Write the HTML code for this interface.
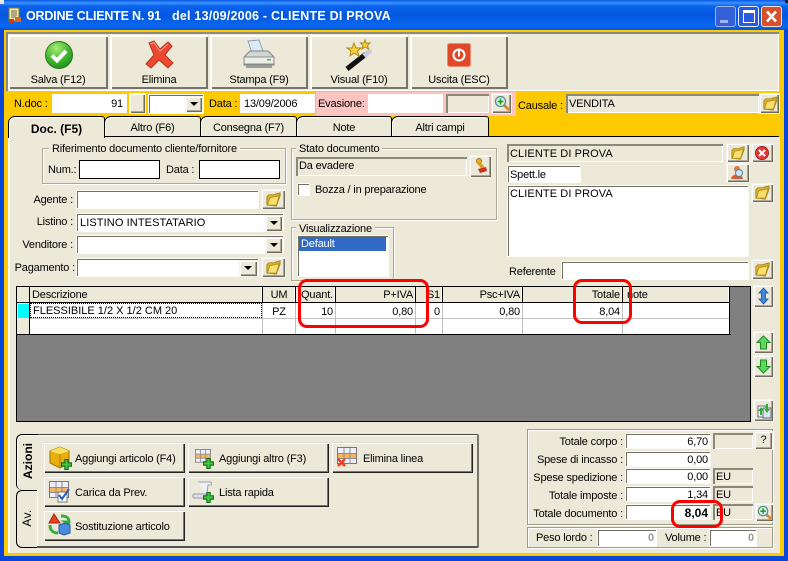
<!DOCTYPE html>
<html><head><meta charset="utf-8"><style>
html,body{margin:0;padding:0;background:#0a3cc8}
#w{position:relative;width:788px;height:561px;overflow:hidden;background:#0a46d8;font:11px/16px "Liberation Sans",sans-serif;letter-spacing:-.18px;color:#000}
#w div{position:absolute;box-sizing:border-box;white-space:nowrap}
#w svg{position:absolute;overflow:visible}
.f{background:#fff;box-shadow:inset 2px 2px 0 #716f64,inset -2px -2px 0 #fff;outline:1px solid #fdfdf8;outline-offset:-1px;padding:2px 4px;border-top:0}
.g{background:#ece9d8;box-shadow:inset 2px 2px 0 #8a8878,inset -1px -1px 0 #fff;padding:2px 3px}
.b{background:#ece9d8;box-shadow:inset 1px 1px 0 #fff,inset -1px -1px 0 #6e6c60,inset -2px -2px 0 #aca899,0 0 0 1px #f4f2e8}
.t{background:#ece9d8;box-shadow:inset 2px 2px 0 #fff,inset -2px -2px 0 #77756a;text-align:center}
.k{background:#ece9d8;box-shadow:inset 1px 1px 0 #fff,inset -1px -1px 0 #222,inset -2px -2px 0 #777;border-top:1px solid #ddd}
.gr{border:1px solid #aca899;box-shadow:inset 1px 1px 0 #fff,1px 1px 0 #fff;background:#ece9d8}
.lg{background:#ece9d8;padding:0 3px;line-height:16px}
.tab{background:#ece9d8;border:1px solid #000;border-bottom:0;border-top-left-radius:7px;border-top-right-radius:3px;text-align:center;padding-top:3px;box-shadow:inset 1px 1px 0 #fff}
.l{text-align:right}
.c{background:#000;width:1px}
.h{background:#000;height:1px}
.hd{background:#ece9d8;top:287px;height:15px;line-height:17px;padding:0 2px;box-shadow:inset -1px 0 0 #fff}
.r{text-align:right}
.red{border:3px solid #f00;border-radius:9px}
</style></head><body><div id="w">
<svg width="0" height="0" style="position:absolute"><defs>
<symbol id="fo" viewBox="0 0 16 16"><path d="M1 5 L1 14 L11 15 L15 4 L15 1 L11 2 L9 3 L3 3Z" fill="#e2b428" stroke="#a58414" stroke-width="1"/><path d="M4 6 L14 4 L11 14 L1.5 14Z" fill="#f8e070" stroke="#b4921e"/></symbol>
<symbol id="zm" viewBox="0 0 16 16"><path d="M9 9 L15 15" stroke="#e8872a" stroke-width="3"/><circle cx="6.5" cy="6.5" r="5" fill="#dff2f2" stroke="#5c8a8a" stroke-width="1.3"/><path d="M6.5 3.5v6M3.5 6.5h6" stroke="#10a010" stroke-width="1.6"/></symbol>
<symbol id="ar" viewBox="0 0 9 5"><path d="M0 0h8l-4 4z" fill="#000"/></symbol>
<symbol id="pl" viewBox="0 0 10 10"><path d="M3.5 .5h3v3h3v3h-3v3h-3v-3h-3v-3h3z" fill="#43c543" stroke="#146e14"/></symbol>
<symbol id="tb" viewBox="0 0 20 20"><rect x=".5" y=".5" width="19" height="16" fill="#eef" stroke="#777"/><rect x="1" y="7" width="18" height="5" fill="#f8b65a"/><path d="M7 1v16M13 1v16M1 6.500h18M1 11.500h18" stroke="#8d8d8d"/></symbol>
</defs></svg>

<!-- title bar -->
<div style="left:0;top:0;width:788px;height:30px;border-radius:7px 7px 0 0;background:linear-gradient(#0a58e4 0,#3a93ff 3px,#0a62ea 6px,#0458e0 16px,#0a68f0 26px,#0654dc 30px)"></div>
<div style="left:0;top:0;width:4px;height:4px;background:#e8e8e8"></div>
<div style="right:0;top:0;width:3px;height:3px;background:#222"></div>
<svg style="left:8px;top:8px" width="16" height="16"><rect x="1" y="0" width="10" height="13" fill="#f5e7a5" stroke="#8a7a30"/><path d="M3 3h6M3 5h6M3 7h6M3 9h5" stroke="#666"/><rect x="7" y="9" width="6" height="5" fill="#d86820"/><rect x="1" y="11" width="5" height="4" fill="#d03818"/></svg>
<div style="left:26px;top:9px;color:#fff;font:bold 12.5px/15px 'Liberation Sans',sans-serif;letter-spacing:-.2px">ORDINE CLIENTE N. 91</div>
<div style="left:172px;top:9px;color:#fff;font:bold 12.5px/15px 'Liberation Sans',sans-serif;letter-spacing:.22px">del 13/09/2006 - CLIENTE DI PROVA</div>
<div style="left:715px;top:6px;width:21px;height:21px;border:1px solid #9db4f0;border-radius:3px;background:#3560d8"><div style="left:4px;top:13px;width:8px;height:3px;background:#9fb4f0"></div></div>
<div style="left:738px;top:6px;width:21px;height:21px;border:1px solid #e8eefc;border-radius:3px;background:#2a5ae0"><div style="left:4px;top:3px;width:12px;height:13px;border:1px solid #fff;border-top-width:3px"></div></div>
<div style="left:761px;top:6px;width:21px;height:21px;border:1px solid #f2e4dc;border-radius:3px;background:#d8502a"><svg width="19" height="19"><path d="M5 4.500 L14 14.500 M14 4.500 L5 14.500" stroke="#fff" stroke-width="2.600"/></svg></div>

<!-- yellow frame -->
<div style="left:4px;top:30px;width:780px;height:526px;background:#fdca00"></div>

<!-- toolbar -->
<div style="left:6px;top:32px;width:773px;height:59px;background:#ece9d8;box-shadow:inset 2px 2px 0 #8c8a7c,inset -1px -1px 0 #fff"></div>
<div class="t" style="left:8px;top:35px;width:100px;height:54px;padding-top:37px">Salva (F12)</div>
<div class="t" style="left:110px;top:35px;width:98px;height:54px;padding-top:37px">Elimina</div>
<div class="t" style="left:210px;top:35px;width:98px;height:54px;padding-top:37px">Stampa (F9)</div>
<div class="t" style="left:310px;top:35px;width:98px;height:54px;padding-top:37px">Visual (F10)</div>
<div class="t" style="left:410px;top:35px;width:98px;height:54px;padding-top:37px">Uscita (ESC)</div>
<svg style="left:45px;top:41px" width="28" height="28"><defs><radialGradient id="gg" cx=".4" cy=".25" r=".8"><stop offset="0" stop-color="#a8ec78"/><stop offset=".6" stop-color="#3eb52a"/><stop offset="1" stop-color="#1f8a1c"/></radialGradient></defs><circle cx="14" cy="14" r="13.500" fill="url(#gg)" stroke="#2b7a22"/><path d="M7 14.500 L12 19.500 L21 10" fill="none" stroke="#fff" stroke-width="4"/></svg>
<svg style="left:145px;top:41px" width="29" height="28"><path d="M4 2 L9 0 L15 8 L23 1 L27 5 L20 14 L28 22 L23 27 L14 19 L6 27 L1 23 L9 14Z" fill="#ec4a30" stroke="#b63020"/><path d="M5 3 L9 1.500 L15 10 L23 3" fill="none" stroke="#f8a090"/></svg>
<svg style="left:243px;top:40px" width="32" height="30"><path d="M5 1 L16 0 L20 11 L9 13Z" fill="#dceaf8" stroke="#8aa0b8"/><path d="M1 17 L7 11 L25 11 L31 17 L31 25 L1 25Z" fill="#d4d6d4" stroke="#808480"/><path d="M1 17 L31 17 L31 24 L1 24Z" fill="#eceeec" stroke="#8a8e8a"/><path d="M3 25h26v3H3z" fill="#9a9e9a"/><rect x="24" y="19" width="4" height="1.500" fill="#50b850"/></svg>
<svg style="left:345px;top:40px" width="30" height="30"><path d="M2 29 L21 14" stroke="#111" stroke-width="5"/><path d="M19 16 L26 10" stroke="#ccd" stroke-width="5"/><path d="M9 3 L11 8 L16 8 L12.500 11 L14 16 L9 13 L5 16 L6 11 L2 8 L7 8Z" fill="#f6d040" stroke="#b08a10"/><path d="M20 0 L21 3 L25 3 L22.500 5.500 L23.500 9 L20 7 L17 9 L18 5.500 L15.500 3 L19 3Z" fill="#f6d040" stroke="#b08a10"/></svg>
<svg style="left:447px;top:43px" width="24" height="24"><rect x=".5" y=".5" width="23" height="23" rx="2" fill="#e0482a" stroke="#f08a70"/><circle cx="12" cy="12" r="5.500" fill="none" stroke="#fff" stroke-width="2"/><path d="M12 7.500v6" stroke="#fff" stroke-width="2"/></svg>

<!-- doc row -->
<div style="left:316px;top:92px;width:200px;height:24px;background:#fcc4c0"></div>
<div style="left:14px;top:96px">N.doc :</div>
<div class="f r" style="left:52px;top:94px;width:75px;height:19px;box-shadow:inset 1px 1px 0 #aaa">91</div>
<div class="b" style="left:130px;top:94px;width:15px;height:19px"></div>
<div class="f" style="left:148px;top:94px;width:56px;height:20px"></div>
<div class="b" style="left:186px;top:97px;width:16px;height:15px"><svg style="left:4px;top:5px" width="9" height="5"><use href="#ar"/></svg></div>
<div style="left:209px;top:96px">Data :</div>
<div class="f" style="left:240px;top:94px;width:75px;height:19px;box-shadow:inset 1px 1px 0 #aaa">13/09/2006</div>
<div style="left:318px;top:96px">Evasione:</div>
<div class="f" style="left:368px;top:94px;width:75px;height:19px;box-shadow:inset 1px 1px 0 #aaa"></div>
<div class="g" style="left:446px;top:94px;width:43px;height:19px"></div>
<div class="b" style="left:492px;top:94px;width:19px;height:19px"><svg style="left:2px;top:1px" width="16" height="16"><use href="#zm"/></svg></div>
<div style="left:518px;top:98px">Causale :</div>
<div class="g" style="left:566px;top:94px;width:193px;height:19px;padding-top:2px">VENDITA</div>
<div class="b" style="left:760px;top:94px;width:19px;height:19px"><svg style="left:3px;top:2px" width="15" height="15"><use href="#fo"/></svg></div>

<!-- main panel -->
<div style="left:8px;top:136px;width:772px;height:417px;background:#ece9d8;border-top:1px solid #000;border-left:2px solid #fff;border-right:2px solid #ece9d8"></div>
<div class="tab" style="left:104px;top:116px;width:97px;height:20px">Altro (F6)</div>
<div class="tab" style="left:200px;top:116px;width:97px;height:20px">Consegna (F7)</div>
<div class="tab" style="left:296px;top:116px;width:96px;height:20px">Note</div>
<div class="tab" style="left:391px;top:116px;width:98px;height:20px">Altri campi</div>
<div class="tab" style="left:8px;top:116px;width:97px;height:22px;font-weight:bold;font-size:12px;letter-spacing:0;padding-top:4px;border-bottom:0">Doc. (F5)</div>

<!-- riferimento group -->
<div class="gr" style="left:42px;top:148px;width:244px;height:36px"></div>
<div class="lg" style="left:49px;top:141px">Riferimento documento cliente/fornitore</div>
<div style="left:48px;top:162px">Num.:</div>
<div style="left:79px;top:160px;width:81px;height:19px;background:#fff;border:1px solid #000"></div>
<div style="left:166px;top:162px">Data :</div>
<div style="left:199px;top:160px;width:81px;height:19px;background:#fff;border:1px solid #000"></div>

<div class="l" style="left:10px;top:192px;width:63px">Agente :</div>
<div class="f" style="left:76px;top:190px;width:183px;height:19px"></div>
<div class="b" style="left:262px;top:190px;width:23px;height:19px"><svg style="left:4px;top:2px" width="15" height="15"><use href="#fo"/></svg></div>
<div class="l" style="left:10px;top:214px;width:63px">Listino :</div>
<div class="f" style="left:76px;top:213px;width:208px;height:19px;padding-top:2px;letter-spacing:.1px">LISTINO INTESTATARIO</div>
<div class="b" style="left:266px;top:216px;width:16px;height:15px"><svg style="left:4px;top:5px" width="9" height="5"><use href="#ar"/></svg></div>
<div class="l" style="left:10px;top:237px;width:63px">Venditore :</div>
<div class="f" style="left:76px;top:235px;width:208px;height:19px"></div>
<div class="b" style="left:266px;top:238px;width:16px;height:15px"><svg style="left:4px;top:5px" width="9" height="5"><use href="#ar"/></svg></div>
<div class="l" style="left:10px;top:260px;width:65px">Pagamento :</div>
<div class="f" style="left:76px;top:258px;width:183px;height:19px"></div>
<div class="b" style="left:240px;top:261px;width:17px;height:15px"><svg style="left:4px;top:5px" width="9" height="5"><use href="#ar"/></svg></div>
<div class="b" style="left:262px;top:258px;width:23px;height:19px"><svg style="left:4px;top:2px" width="15" height="15"><use href="#fo"/></svg></div>

<!-- stato -->
<div class="gr" style="left:291px;top:148px;width:206px;height:72px"></div>
<div class="lg" style="left:296px;top:141px">Stato documento</div>
<div class="g" style="left:296px;top:157px;width:171px;height:19px;padding-top:1px">Da evadere</div>
<div class="b" style="left:470px;top:156px;width:21px;height:21px"><svg style="left:4px;top:2px" width="14" height="17"><circle cx="5" cy="3" r="2.500" fill="#e8b020" stroke="#a87810"/><path d="M5 5 L9 10" stroke="#d8a018" stroke-width="3.500"/><path d="M4 11 L12 9 L13 13 L6 15Z" fill="#c83020"/></svg></div>
<div class="f" style="left:297px;top:183px;width:13px;height:13px"></div>
<div style="left:315px;top:182px">Bozza / in preparazione</div>

<div class="gr" style="left:291px;top:227px;width:103px;height:54px"></div>
<div class="lg" style="left:296px;top:221px">Visualizzazione</div>
<div class="f" style="left:297px;top:235px;width:92px;height:42px"></div>
<div style="left:299px;top:237px;width:87px;height:14px;background:#316ac5;color:#fff;padding-left:2px;line-height:15px">Default</div>

<!-- client -->
<div class="g" style="left:507px;top:144px;width:216px;height:18px;padding-top:2px;letter-spacing:.1px">CLIENTE DI PROVA</div>
<div class="b" style="left:727px;top:144px;width:22px;height:18px"><svg style="left:4px;top:2px" width="14" height="14"><use href="#fo"/></svg></div>
<div class="b" style="left:752px;top:144px;width:21px;height:18px"><svg style="left:3px;top:2px" width="14" height="14"><circle cx="7" cy="7" r="6.500" fill="#e83838" stroke="#a02020"/><path d="M4 4l6 6M10 4l-6 6" stroke="#fff" stroke-width="2"/></svg></div>
<div class="f" style="left:507px;top:165px;width:74px;height:18px;padding-left:3px">Spett.le</div>
<div class="b" style="left:727px;top:164px;width:22px;height:18px"><svg style="left:3px;top:1px" width="16" height="15"><path d="M1 14 C2 8 12 8 13 14Z" fill="#d85a30"/><circle cx="7" cy="4" r="3" fill="#e07a40"/><circle cx="9" cy="8" r="3.500" fill="#cfe6f2" stroke="#5a8090"/></svg></div>
<div class="f" style="left:507px;top:185px;width:242px;height:72px;padding:1px 3px;letter-spacing:.1px">CLIENTE DI PROVA</div>
<div class="b" style="left:752px;top:184px;width:21px;height:18px"><svg style="left:3px;top:1px" width="15" height="15"><use href="#fo"/></svg></div>
<div style="left:509px;top:264px">Referente</div>
<div class="f" style="left:561px;top:261px;width:188px;height:19px"></div>
<div class="b" style="left:752px;top:260px;width:21px;height:19px"><svg style="left:3px;top:2px" width="15" height="15"><use href="#fo"/></svg></div>

<!-- grid -->
<div style="left:16px;top:286px;width:735px;height:136px;background:#808080;border:1px solid #000"></div>
<div style="left:17px;top:287px;width:713px;height:47px;background:#fff"></div>
<div style="left:17px;top:287px;width:713px;height:15px;background:#ece9d8"></div>
<div style="left:17px;top:303px;width:12px;height:31px;background:#ece9d8"></div>
<div style="left:18px;top:304px;width:11px;height:14px;background:#00ffff"></div>
<div class="hd" style="left:30px;width:232px">Descrizione</div>
<div class="hd" style="left:263px;width:32px;text-align:center">UM</div>
<div class="hd" style="left:296px;width:39px;padding:0 1px 0 5px;overflow:hidden">Quant.</div>
<div class="hd r" style="left:336px;width:79px">P+IVA</div>
<div class="hd r" style="left:416px;width:26px">S1</div>
<div class="hd r" style="left:443px;width:79px">Psc+IVA</div>
<div class="hd r" style="left:523px;width:99px">Totale</div>
<div class="hd" style="left:623px;width:106px;padding-left:4px">note</div>
<div class="h" style="left:17px;top:302px;width:713px"></div>
<div style="left:30px;top:318px;width:699px;height:1px;background:#c0c0c0"></div>
<div class="h" style="left:17px;top:334px;width:714px"></div>
<div class="c" style="left:729px;top:287px;height:47px;background:#000"></div>
<div class="c" style="left:29px;top:287px;height:47px"></div>
<div class="c" style="left:262px;top:287px;height:15px"></div><div class="c" style="left:262px;top:303px;height:31px;background:#c0c0c0"></div>
<div class="c" style="left:295px;top:287px;height:15px"></div><div class="c" style="left:295px;top:303px;height:31px;background:#c0c0c0"></div>
<div class="c" style="left:335px;top:287px;height:15px"></div><div class="c" style="left:335px;top:303px;height:31px;background:#c0c0c0"></div>
<div class="c" style="left:415px;top:287px;height:15px"></div><div class="c" style="left:415px;top:303px;height:31px;background:#c0c0c0"></div>
<div class="c" style="left:442px;top:287px;height:15px"></div><div class="c" style="left:442px;top:303px;height:31px;background:#c0c0c0"></div>
<div class="c" style="left:522px;top:287px;height:15px"></div><div class="c" style="left:522px;top:303px;height:31px;background:#c0c0c0"></div>
<div class="c" style="left:622px;top:287px;height:15px"></div><div class="c" style="left:622px;top:303px;height:31px;background:#c0c0c0"></div>
<div style="left:30px;top:303px;width:232px;height:15px;border:1px dotted #000;line-height:15px;padding-left:2px;letter-spacing:0">FLESSIBILE 1/2 X 1/2 CM 20</div>
<div style="left:263px;top:304px;width:32px;text-align:center">PZ</div>
<div class="r" style="left:296px;top:304px;width:37px">10</div>
<div class="r" style="left:336px;top:304px;width:77px">0,80</div>
<div class="r" style="left:416px;top:304px;width:24px">0</div>
<div class="r" style="left:443px;top:304px;width:77px">0,80</div>
<div class="r" style="left:523px;top:304px;width:97px">8,04</div>

<!-- red marks -->
<div class="red" style="left:298px;top:279px;width:131px;height:49px"></div>
<div class="red" style="left:573px;top:279px;width:59px;height:45px"></div>

<!-- side buttons -->
<div class="b" style="left:754px;top:286px;width:19px;height:21px"><svg style="left:4px;top:2px" width="11" height="16"><path d="M5.500 0 L10 5 H7.500 V11 H10 L5.500 16 L1 11 H3.500 V5 H1Z" fill="#3f88dc" stroke="#1c509c" stroke-width=".8"/></svg></div>
<div class="b" style="left:754px;top:332px;width:19px;height:21px"><svg style="left:3px;top:4px" width="13" height="13"><path d="M6.500 0 L13 6.500 H9.500 V13 H3.500 V6.500 H0Z" fill="#5cd65c" stroke="#1e8a1e"/></svg></div>
<div class="b" style="left:754px;top:356px;width:19px;height:21px"><svg style="left:3px;top:4px" width="13" height="13"><path d="M6.500 13 L13 6.500 H9.500 V0 H3.500 V6.500 H0Z" fill="#5cd65c" stroke="#1e8a1e"/></svg></div>
<div class="b" style="left:754px;top:400px;width:19px;height:21px"><svg style="left:3px;top:3px" width="15" height="15"><rect x="1" y="3" width="8" height="11" fill="#fff" stroke="#667"/><rect x="6" y="5" width="8" height="10" fill="#d8e8fa" stroke="#667"/><path d="M4 4 L7 8 H5 V12 H3 V8 H1Z" fill="#30b030"/><path d="M10 10 L13 6 H11 V1 H9 V6 H7Z" fill="#30b030"/></svg></div>

<!-- bottom action panel -->
<div style="left:36px;top:434px;width:443px;height:114px;background:#ece9d8;border:1px solid #77756a;border-top-color:#444;border-right:2px solid #77756a;border-bottom:2px solid #555;border-radius:0 2px 2px 0;box-shadow:inset 1px 1px 0 #fff"></div>
<div style="left:16px;top:490px;width:21px;height:58px;background:#ece9d8;border:1px solid #000;border-right:0;border-radius:6px 0 0 6px"></div>
<div style="left:16px;top:434px;width:22px;height:56px;background:#ece9d8;border:1px solid #000;border-right:0;border-bottom:0;border-radius:6px 0 0 6px;box-shadow:inset 1px 1px 0 #fff"></div>
<div style="left:-2px;top:454px;width:60px;height:14px;transform:rotate(-90deg);text-align:center;font-weight:bold;font-size:12px;letter-spacing:0;line-height:14px">Azioni</div>
<div style="left:-3px;top:511px;width:60px;height:14px;transform:rotate(-90deg);text-align:center;line-height:14px;font-size:12px;letter-spacing:.3px">Av.</div>

<div class="k" style="left:44px;top:442px;width:141px;height:31px;padding:8px 0 0 31px">Aggiungi articolo (F4)</div>
<div class="k" style="left:188px;top:442px;width:141px;height:31px;padding:8px 0 0 31px">Aggiungi altro (F3)</div>
<div class="k" style="left:332px;top:442px;width:141px;height:31px;padding:8px 0 0 31px">Elimina linea</div>
<div class="k" style="left:44px;top:476px;width:141px;height:31px;padding:8px 0 0 31px">Carica da Prev.</div>
<div class="k" style="left:188px;top:476px;width:141px;height:31px;padding:8px 0 0 31px">Lista rapida</div>
<div class="k" style="left:44px;top:510px;width:141px;height:31px;padding:8px 0 0 31px">Sostituzione articolo</div>

<svg style="left:48px;top:446px" width="24" height="24"><path d="M2 5 L12 1 L21 5 L21 17 L12 22 L2 17Z" fill="#e8ae10" stroke="#a07808"/><path d="M2 5 L12 8 L21 5 L12 1Z" fill="#fbe060"/><path d="M12 8V22" stroke="#b08810"/><use href="#pl" x="13" y="13" width="11" height="11"/></svg>
<svg style="left:193px;top:449px" width="21" height="20"><use href="#tb" width="20" height="16"/><use href="#pl" x="10" y="9" width="11" height="11"/></svg>
<svg style="left:337px;top:447px" width="21" height="22"><use href="#tb" width="20" height="20"/><path d="M1 12 L8 19 M8 12 L1 19" stroke="#e84020" stroke-width="2.500"/></svg>
<svg style="left:49px;top:481px" width="22" height="22"><use href="#tb" width="20" height="20"/><rect x="9" y="11" width="9" height="10" fill="#fff" stroke="#777"/><path d="M10 14 L13 18 L20 8" fill="none" stroke="#2c60c8" stroke-width="2"/></svg>
<svg style="left:192px;top:481px" width="22" height="22"><path d="M6 1 H18 C20 1 20 4 18 4 L16 4 L15 13 H3 C1 13 1 16 3 16 H13" fill="#eef0f4" stroke="#9aa0b0"/><path d="M3 13 H14 V17 H3 C0 17 0 13 3 13Z" fill="#dde" stroke="#99a"/><use href="#pl" x="11" y="11" width="11" height="11"/></svg>
<svg style="left:49px;top:514px" width="22" height="22"><path d="M5 0 L11 9 H0Z" fill="#e84020" stroke="#a02810"/><path d="M12 2 C18 2 20 4 20 8 L16 8 L20 11" fill="none" stroke="#34b040" stroke-width="3"/><path d="M1 11 C1 17 5 19 9 19" fill="none" stroke="#34b040" stroke-width="3"/><path d="M10 11 L16 9 L21 11 V19 L15 21 L10 19Z" fill="#4a8ae0" stroke="#2458a0"/></svg>

<!-- totals -->
<div class="gr" style="left:527px;top:429px;width:246px;height:96px;border-color:#9d9b8c"></div>
<div class="gr" style="left:527px;top:527px;width:246px;height:21px;border-color:#9d9b8c"></div>
<div class="l" style="left:530px;top:434px;width:93px">Totale corpo :</div>
<div class="f r" style="left:625px;top:433px;width:86px;height:16px;padding:1px 3px">6,70</div>
<div class="g" style="left:713px;top:433px;width:40px;height:16px"></div>
<div class="b" style="left:755px;top:432px;width:17px;height:17px;text-align:center;line-height:16px">?</div>
<div class="l" style="left:530px;top:452px;width:93px">Spese di incasso :</div>
<div class="f r" style="left:625px;top:451px;width:86px;height:16px;padding:1px 3px">0,00</div>
<div class="l" style="left:530px;top:470px;width:93px">Spese spedizione :</div>
<div class="f r" style="left:625px;top:468px;width:86px;height:16px;padding:1px 3px">0,00</div>
<div class="g" style="left:713px;top:468px;width:40px;height:16px;padding:1px 3px">EU</div>
<div class="l" style="left:530px;top:488px;width:93px">Totale imposte :</div>
<div class="f r" style="left:625px;top:486px;width:86px;height:16px;padding:1px 3px">1,34</div>
<div class="g" style="left:713px;top:486px;width:40px;height:16px;padding:1px 3px">EU</div>
<div class="l" style="left:530px;top:506px;width:93px">Totale documento :</div>
<div class="f r" style="left:625px;top:504px;width:86px;height:16px;padding:1px 3px;font-weight:bold;font-size:12px;letter-spacing:0">8,04</div>
<div class="g" style="left:713px;top:504px;width:40px;height:16px;padding:1px 3px">EU</div>
<div class="b" style="left:756px;top:504px;width:17px;height:17px"><svg style="left:1px;top:1px" width="15" height="15"><use href="#zm"/></svg></div>
<div class="red" style="left:671px;top:500px;width:52px;height:28px"></div>
<div style="left:536px;top:530px">Peso lordo :</div>
<div class="f r" style="left:597px;top:529px;width:60px;height:18px;color:#999;font-weight:bold;padding:1px 3px">0</div>
<div style="left:665px;top:530px">Volume :</div>
<div class="f r" style="left:709px;top:529px;width:48px;height:18px;color:#999;font-weight:bold;padding:1px 3px">0</div>
</div></body></html>
